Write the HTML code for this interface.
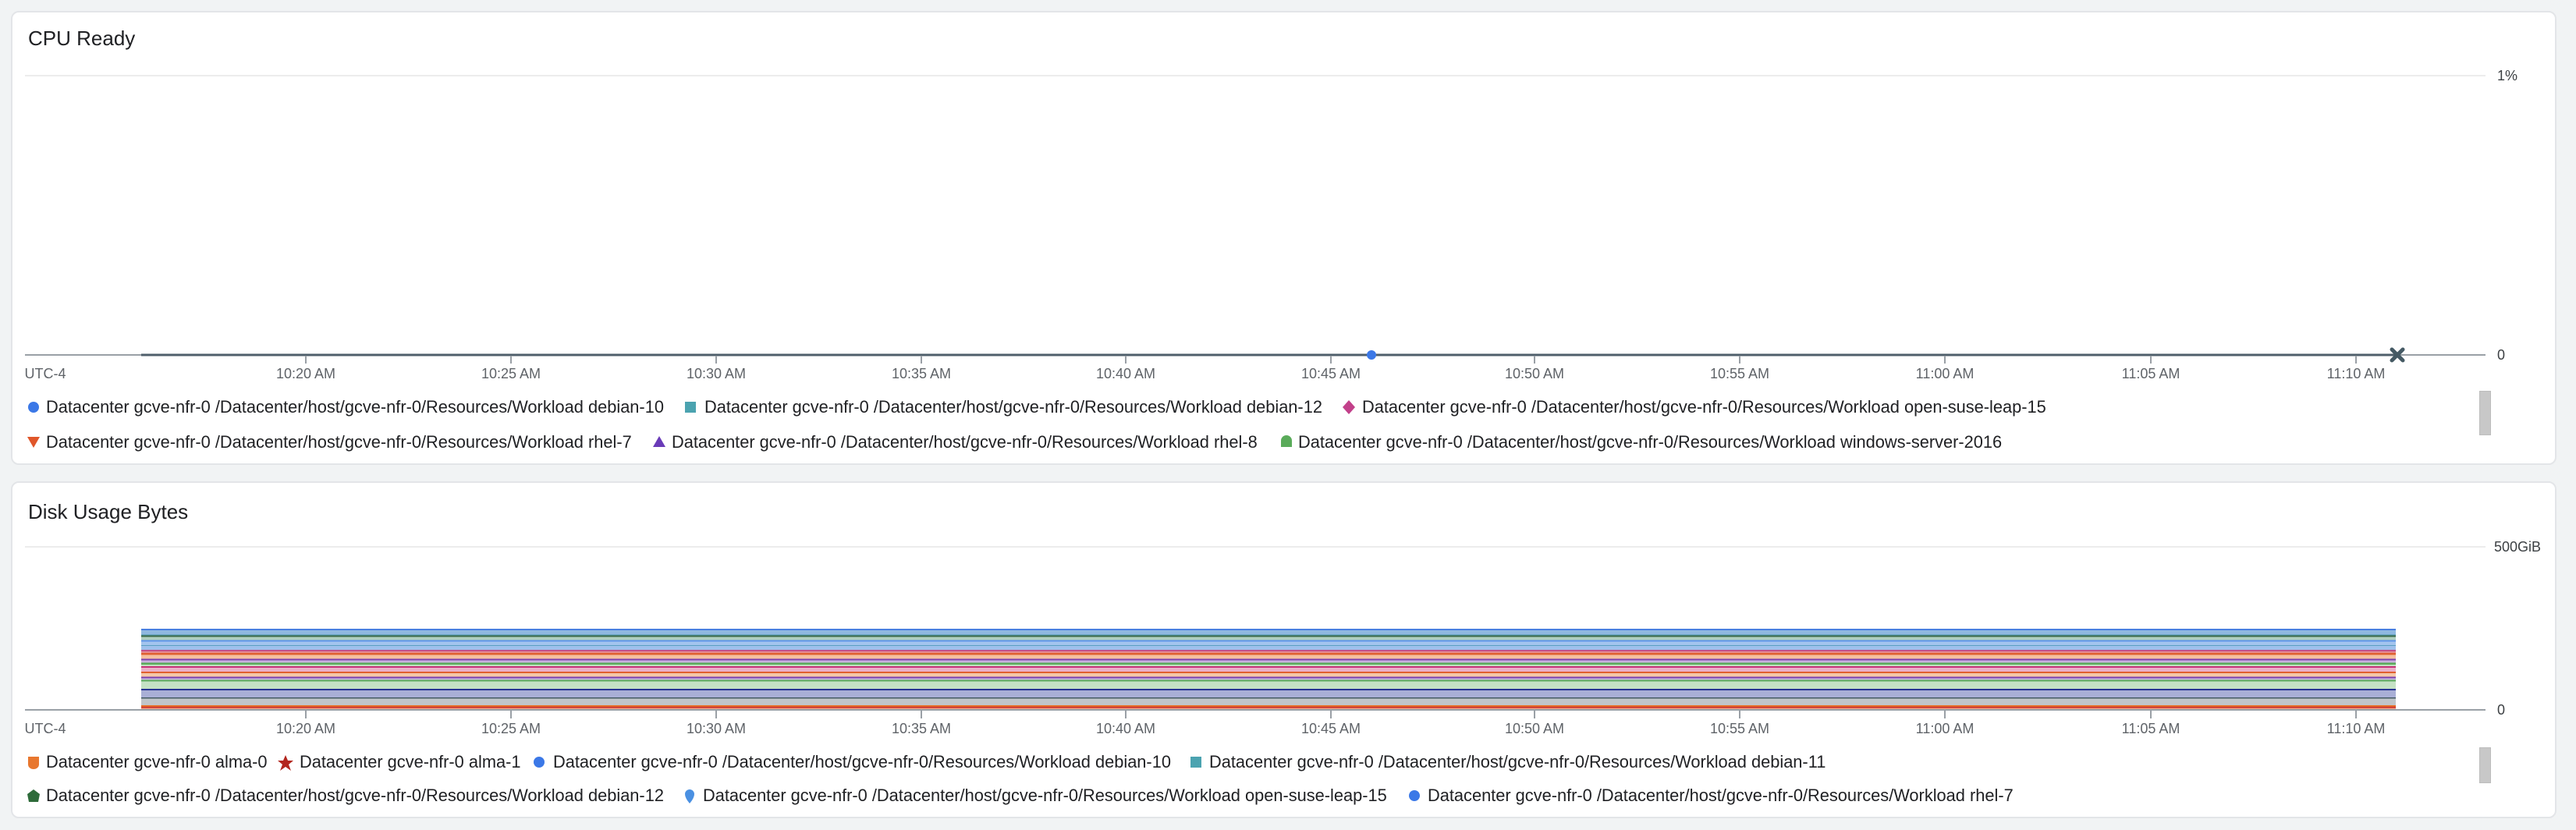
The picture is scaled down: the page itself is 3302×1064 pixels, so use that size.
<!DOCTYPE html>
<html><head><meta charset="utf-8"><style>
*{margin:0;padding:0;box-sizing:border-box}
body{width:3302px;height:1064px;background:#f1f3f4;position:relative;overflow:hidden;font-family:"Liberation Sans",sans-serif}
.card{position:absolute;left:14px;width:3263px;background:#fff;border:2px solid #e3e5e8;border-radius:10px}
.t{position:absolute;font-size:26px;color:#202124;white-space:nowrap}
.tk{position:absolute;font-size:18px;color:#5f6368;white-space:nowrap;transform:translateX(-50%)}
.ax{position:absolute;font-size:18px;color:#3c4043;white-space:nowrap}
.lg{position:absolute;font-size:21.8px;color:#202124;white-space:nowrap;line-height:24px}
.gb{position:absolute;left:3178px;width:15px;background:#c8c8c8;border:1px solid #bdbdbd}
svg{position:absolute;left:0;top:0}
</style></head><body>
<div class="card" style="top:14px;height:582px"></div>
<div class="card" style="top:617px;height:432px"></div>

<svg width="3302" height="1064">
 <line x1="32" y1="97" x2="3186" y2="97" stroke="#ececec" stroke-width="2"/>
 <line x1="32" y1="455" x2="3186" y2="455" stroke="#9aa0a6" stroke-width="2"/>
 <line x1="181" y1="455" x2="3073" y2="455" stroke="#4f5f6b" stroke-width="3"/>
 <g stroke="#9aa0a6" stroke-width="2">
  <line x1="392" y1="456" x2="392" y2="466"/><line x1="655" y1="456" x2="655" y2="466"/><line x1="918" y1="456" x2="918" y2="466"/><line x1="1181" y1="456" x2="1181" y2="466"/><line x1="1443" y1="456" x2="1443" y2="466"/><line x1="1706" y1="456" x2="1706" y2="466"/><line x1="1967" y1="456" x2="1967" y2="466"/><line x1="2230" y1="456" x2="2230" y2="466"/><line x1="2493" y1="456" x2="2493" y2="466"/><line x1="2757" y1="456" x2="2757" y2="466"/><line x1="3020" y1="456" x2="3020" y2="466"/>
 </g>
 <circle cx="1758" cy="455" r="6" fill="#3b78e7"/>
 <path d="M3066 448 L3080 462 M3080 448 L3066 462" stroke="#455a64" stroke-width="5" stroke-linecap="round"/>
 <line x1="32" y1="701" x2="3186" y2="701" stroke="#ececec" stroke-width="2"/>
 <rect x="181" y="806" width="2890" height="104" fill="url(#st)"/>
 <line x1="32" y1="910" x2="3186" y2="910" stroke="#9aa0a6" stroke-width="2"/>
 <g stroke="#9aa0a6" stroke-width="2">
  <line x1="392" y1="911" x2="392" y2="921"/><line x1="655" y1="911" x2="655" y2="921"/><line x1="918" y1="911" x2="918" y2="921"/><line x1="1181" y1="911" x2="1181" y2="921"/><line x1="1443" y1="911" x2="1443" y2="921"/><line x1="1706" y1="911" x2="1706" y2="921"/><line x1="1967" y1="911" x2="1967" y2="921"/><line x1="2230" y1="911" x2="2230" y2="921"/><line x1="2493" y1="911" x2="2493" y2="921"/><line x1="2757" y1="911" x2="2757" y2="921"/><line x1="3020" y1="911" x2="3020" y2="921"/>
 </g>
 <defs>
 <linearGradient id="st" x1="0" y1="0" x2="0" y2="1">
  <stop offset="0" stop-color="#4a7fe0"/><stop offset=".02" stop-color="#4a7fe0"/>
  <stop offset=".02" stop-color="#8fb8e0"/><stop offset=".07" stop-color="#8fb8e0"/>
  <stop offset=".07" stop-color="#4e9ab0"/><stop offset=".08" stop-color="#4e9ab0"/>
  <stop offset=".08" stop-color="#3d6b4a"/><stop offset=".10" stop-color="#3d6b4a"/>
  <stop offset=".10" stop-color="#b0cfc0"/><stop offset=".14" stop-color="#b0cfc0"/>
  <stop offset=".14" stop-color="#5f95e8"/><stop offset=".16" stop-color="#5f95e8"/>
  <stop offset=".16" stop-color="#a3c4ee"/><stop offset=".20" stop-color="#a3c4ee"/>
  <stop offset=".20" stop-color="#5aa0c0"/><stop offset=".21" stop-color="#5aa0c0"/>
  <stop offset=".21" stop-color="#9fc0ec"/><stop offset=".26" stop-color="#9fc0ec"/>
  <stop offset=".26" stop-color="#c2508a"/><stop offset=".28" stop-color="#c2508a"/>
  <stop offset=".28" stop-color="#e58a90"/><stop offset=".30" stop-color="#e58a90"/>
  <stop offset=".30" stop-color="#e06030"/><stop offset=".32" stop-color="#e06030"/>
  <stop offset=".32" stop-color="#f5c0a0"/><stop offset=".37" stop-color="#f5c0a0"/>
  <stop offset=".37" stop-color="#7b3fb0"/><stop offset=".39" stop-color="#7b3fb0"/>
  <stop offset=".39" stop-color="#c8b0dc"/><stop offset=".42" stop-color="#c8b0dc"/>
  <stop offset=".42" stop-color="#5aab5a"/><stop offset=".44" stop-color="#5aab5a"/>
  <stop offset=".44" stop-color="#c0e0c0"/><stop offset=".46" stop-color="#c0e0c0"/>
  <stop offset=".46" stop-color="#c8307a"/><stop offset=".48" stop-color="#c8307a"/>
  <stop offset=".48" stop-color="#eab0c8"/><stop offset=".53" stop-color="#eab0c8"/>
  <stop offset=".53" stop-color="#e06030"/><stop offset=".55" stop-color="#e06030"/>
  <stop offset=".55" stop-color="#f5c8a8"/><stop offset=".59" stop-color="#f5c8a8"/>
  <stop offset=".59" stop-color="#7b3fb0"/><stop offset=".61" stop-color="#7b3fb0"/>
  <stop offset=".61" stop-color="#c8b8e0"/><stop offset=".63" stop-color="#c8b8e0"/>
  <stop offset=".63" stop-color="#5aab5a"/><stop offset=".65" stop-color="#5aab5a"/>
  <stop offset=".65" stop-color="#c5e1c5"/><stop offset=".74" stop-color="#c5e1c5"/>
  <stop offset=".74" stop-color="#283593"/><stop offset=".76" stop-color="#283593"/>
  <stop offset=".76" stop-color="#a9afd6"/><stop offset=".845" stop-color="#a9afd6"/>
  <stop offset=".845" stop-color="#455a64"/><stop offset=".86" stop-color="#455a64"/>
  <stop offset=".86" stop-color="#c0c5c9"/><stop offset=".94" stop-color="#c0c5c9"/>
  <stop offset=".94" stop-color="#e8702a"/><stop offset=".96" stop-color="#e8702a"/>
  <stop offset=".96" stop-color="#c62828"/><stop offset=".975" stop-color="#c62828"/>
  <stop offset=".975" stop-color="#f0a080"/><stop offset="1" stop-color="#f0a080"/>
 </linearGradient>
 </defs>
 <circle cx="43" cy="522" r="7" fill="#3b78e7"/>
 <rect x="878" y="515" width="14" height="14" fill="#4ba3b0"/>
 <path d="M1729 513 L1737 522 L1729 531 L1721 522 Z" fill="#c2408a"/>
 <path d="M35 560 L51 560 L43 574 Z" fill="#e0562a"/>
 <path d="M845 559 L853 573 L837 573 Z" fill="#6a3bb8"/>
 <path d="M1642 573 L1642 565 A7 7 0 0 1 1656 565 L1656 573 Z" fill="#5aab5a"/>
 <path d="M36 970 L50 970 L50 980 A7 6 0 0 1 36 980 Z" fill="#e8772e"/>
 <path d="M366 968 L369 975 L376 975 L370 980 L373 988 L366 983 L359 988 L362 980 L356 975 L363 975 Z" fill="#b3261e"/>
 <circle cx="691" cy="977" r="7" fill="#3b78e7"/>
 <rect x="1526" y="970" width="14" height="14" fill="#4ba3b0"/>
 <path d="M43 1012 L51 1018 L49 1028 L37 1028 L35 1018 Z" fill="#2e6b3a"/>
 <path d="M884 1012 A6 6 0 0 1 890 1018 Q890 1023 884 1030 Q878 1023 878 1018 A6 6 0 0 1 884 1012 Z" fill="#4a90e2"/>
 <circle cx="1813" cy="1020" r="7" fill="#3b78e7"/>
</svg>

<div class="t" style="left:36px;top:34px">CPU Ready</div>
<div class="ax" style="left:3201px;top:87px">1%</div>
<div class="ax" style="left:3201px;top:445px">0</div>
<div class="tk" style="left:58px;top:469px">UTC-4</div>
<div class="tk" style="left:392px;top:469px">10:20 AM</div>
<div class="tk" style="left:655px;top:469px">10:25 AM</div>
<div class="tk" style="left:918px;top:469px">10:30 AM</div>
<div class="tk" style="left:1181px;top:469px">10:35 AM</div>
<div class="tk" style="left:1443px;top:469px">10:40 AM</div>
<div class="tk" style="left:1706px;top:469px">10:45 AM</div>
<div class="tk" style="left:1967px;top:469px">10:50 AM</div>
<div class="tk" style="left:2230px;top:469px">10:55 AM</div>
<div class="tk" style="left:2493px;top:469px">11:00 AM</div>
<div class="tk" style="left:2757px;top:469px">11:05 AM</div>
<div class="tk" style="left:3020px;top:469px">11:10 AM</div>
<div class="lg" style="left:59px;top:510px">Datacenter gcve-nfr-0 /Datacenter/host/gcve-nfr-0/Resources/Workload debian-10</div>
<div class="lg" style="left:903px;top:510px">Datacenter gcve-nfr-0 /Datacenter/host/gcve-nfr-0/Resources/Workload debian-12</div>
<div class="lg" style="left:1746px;top:510px">Datacenter gcve-nfr-0 /Datacenter/host/gcve-nfr-0/Resources/Workload open-suse-leap-15</div>
<div class="lg" style="left:59px;top:555px">Datacenter gcve-nfr-0 /Datacenter/host/gcve-nfr-0/Resources/Workload rhel-7</div>
<div class="lg" style="left:861px;top:555px">Datacenter gcve-nfr-0 /Datacenter/host/gcve-nfr-0/Resources/Workload rhel-8</div>
<div class="lg" style="left:1664px;top:555px">Datacenter gcve-nfr-0 /Datacenter/host/gcve-nfr-0/Resources/Workload windows-server-2016</div>
<div class="gb" style="top:501px;height:57px"></div>

<div class="t" style="left:36px;top:641px">Disk Usage Bytes</div>
<div class="ax" style="left:3197px;top:691px">500GiB</div>
<div class="ax" style="left:3201px;top:900px">0</div>
<div class="tk" style="left:58px;top:924px">UTC-4</div>
<div class="tk" style="left:392px;top:924px">10:20 AM</div>
<div class="tk" style="left:655px;top:924px">10:25 AM</div>
<div class="tk" style="left:918px;top:924px">10:30 AM</div>
<div class="tk" style="left:1181px;top:924px">10:35 AM</div>
<div class="tk" style="left:1443px;top:924px">10:40 AM</div>
<div class="tk" style="left:1706px;top:924px">10:45 AM</div>
<div class="tk" style="left:1967px;top:924px">10:50 AM</div>
<div class="tk" style="left:2230px;top:924px">10:55 AM</div>
<div class="tk" style="left:2493px;top:924px">11:00 AM</div>
<div class="tk" style="left:2757px;top:924px">11:05 AM</div>
<div class="tk" style="left:3020px;top:924px">11:10 AM</div>
<div class="lg" style="left:59px;top:965px">Datacenter gcve-nfr-0 alma-0</div>
<div class="lg" style="left:384px;top:965px">Datacenter gcve-nfr-0 alma-1</div>
<div class="lg" style="left:709px;top:965px">Datacenter gcve-nfr-0 /Datacenter/host/gcve-nfr-0/Resources/Workload debian-10</div>
<div class="lg" style="left:1550px;top:965px">Datacenter gcve-nfr-0 /Datacenter/host/gcve-nfr-0/Resources/Workload debian-11</div>
<div class="lg" style="left:59px;top:1008px">Datacenter gcve-nfr-0 /Datacenter/host/gcve-nfr-0/Resources/Workload debian-12</div>
<div class="lg" style="left:901px;top:1008px">Datacenter gcve-nfr-0 /Datacenter/host/gcve-nfr-0/Resources/Workload open-suse-leap-15</div>
<div class="lg" style="left:1830px;top:1008px">Datacenter gcve-nfr-0 /Datacenter/host/gcve-nfr-0/Resources/Workload rhel-7</div>
<div class="gb" style="top:958px;height:46px"></div>
</body></html>
